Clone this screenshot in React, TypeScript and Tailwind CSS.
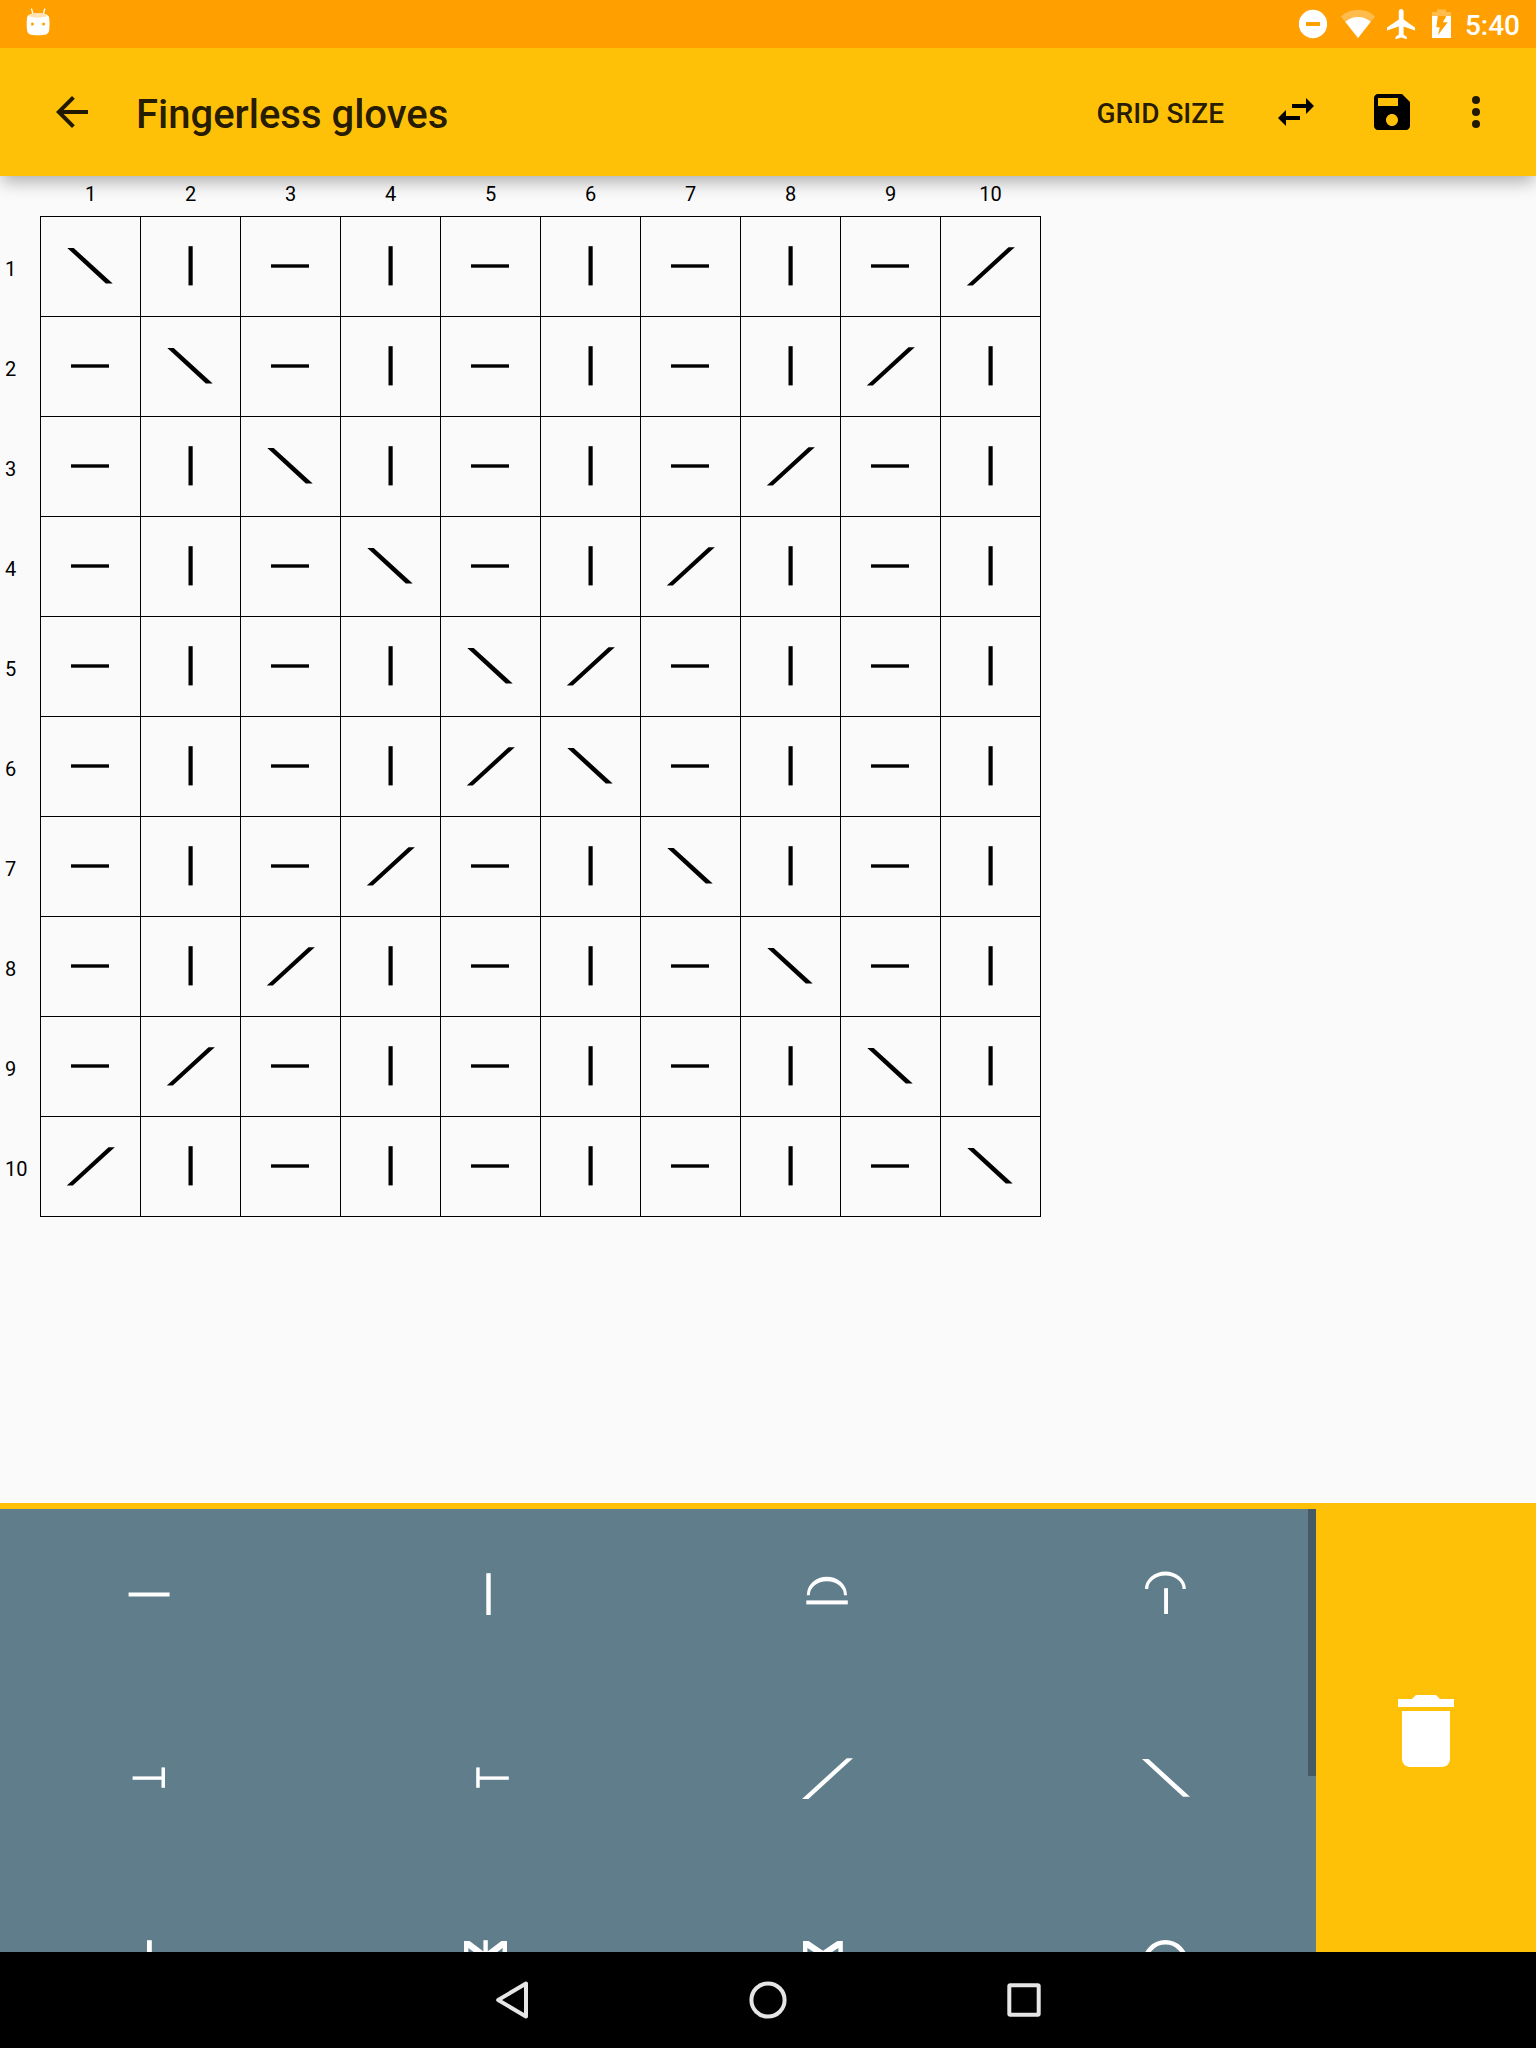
import React from "react";

type StitchName = "purl" | "knit" | "left" | "right";

const SIZE = 10;
const INDEXES = Array.from({ length: SIZE }, (_, i) => i);

function stitchAt(row: number, col: number): StitchName {
  if (row === col) return "left";
  if (row + col === SIZE - 1) return "right";
  return col % 2 === 1 ? "knit" : "purl";
}

function GridStitch({ name }: { name: StitchName }) {
  return (
    <svg viewBox="0 0 100 100" className="size-[100px]" fill="#000">
      {name === "purl" && <rect x="31" y="48.3" width="38" height="3.4" />}
      {name === "knit" && <rect x="48.5" y="30.2" width="4.2" height="39.2" />}
      {name === "left" && <path d="M27.3 32H33.7L72.7 67.5H65.8Z" />}
      {name === "right" && <path d="M26.8 69.5L68.5 31.2H74.8L32.8 69.5Z" />}
    </svg>
  );
}

const PALETTE: React.ReactNode[] = [
  <rect x="28.6" y="48.5" width="41" height="4" />,
  <rect x="47.3" y="29.2" width="4.4" height="41.8" />,
  <>
    <path d="M28.8 51.2A20.1 18.5 0 0 1 69 51.2H66A17.1 14 0 0 0 31.8 51.2Z" />
    <rect x="28.3" y="56.4" width="41.5" height="4" />
  </>,
  <>
    <path d="M28 45A20.4 17.4 0 0 1 68.8 45H65.6A17.2 13.4 0 0 0 31.2 45Z" />
    <rect x="47.1" y="44.2" width="3.9" height="25.8" />
  </>,
  <>
    <rect x="32.6" y="48.4" width="29.7" height="3.4" />
    <rect x="61.5" y="39.4" width="3.5" height="20.4" />
  </>,
  <>
    <rect x="40" y="48.4" width="29.8" height="3.4" />
    <rect x="37.2" y="39.4" width="3.5" height="20.4" />
  </>,
  <path d="M24 71L68.7 30.2H75L30.4 71Z" />,
  <path d="M25 31.1H31.6L73 68.8H66Z" />,
  <rect x="47" y="28.2" width="4.8" height="42" />,
  <>
    <path d="M25 29H30.6L46.5 41L62.4 29H68V71H63.6V36L46.5 49L29.4 36V71H25Z" />
    <rect x="44.4" y="28.2" width="4.4" height="42" />
  </>,
  <path d="M25 29H30.6L45 38.8L59.4 29H64.8V71H60.4V36L45 46L29.4 36V71H25Z" />,
  <circle cx="48.4" cy="50.7" r="20.4" fill="none" stroke="#fff" strokeWidth="4.6" />,
];

function StatusBar() {
  return (
    <div className="flex h-12 items-center justify-between bg-[#ffa000] text-white">
      <svg viewBox="0 0 48 48" className="ml-[5px] size-12" fill="#fff">
        <path d="M26.4 8.5L28 14M39.8 8.5L38.4 14" stroke="#fff" strokeWidth="1.3" fill="none" />
        <path
          fillRule="evenodd"
          d="M22 18C22.5 14.8 26 13.6 33 13.6S43.8 14.8 44.2 18C44.6 21.5 44.6 26.5 44.2 30C43.8 34 41 35.3 33 35.3S22.4 34 22 30C21.6 26.5 21.6 21.5 22 18ZM27.4 22.5A1.5 1.5 0 1 0 27.4 25.5A1.5 1.5 0 1 0 27.4 22.5ZM38.6 22.5A1.5 1.5 0 1 0 38.6 25.5A1.5 1.5 0 1 0 38.6 22.5Z"
        />
        <ellipse cx="33" cy="15.4" rx="9.2" ry="2.3" fill="#ffe3b5" />
      </svg>
      <div className="flex items-center pr-4">
        <svg viewBox="0 0 28 48" className="mr-[14px] h-12 w-7">
          <circle cx="14" cy="24" r="14.2" fill="#fff" />
          <rect x="7" y="22" width="14" height="4" fill="#ffa000" />
        </svg>
        <svg viewBox="0 0 34 48" className="mr-3 h-12 w-[34px]" fill="#fff">
          <path d="M17 38L0 16.5C4.5 12 10.5 10 17 10S29.5 12 34 16.5Z" opacity=".3" />
          <path d="M17 38L4.3 21.8C8 18.5 12 17 17 17S26 18.5 29.7 21.8Z" />
        </svg>
        <svg viewBox="0 0 28 48" className="mr-[17px] h-12 w-7" fill="#fff">
          <path d="M28 30.5V27.5L16.6 19.5V11.5C16.6 10 15.5 9 14.2 9S11.8 10 11.8 11.5V19.5L0 27.5V30.5L11.8 26.5V34.5L8.5 37V39.2L14.2 37.5L19.8 39.2V37L16.6 34.5V26.5Z" />
        </svg>
        <svg viewBox="0 0 19 48" className="mr-[14px] h-12 w-[19px]" fill="#fff">
          <path d="M0 16V12H5V9.5H14V12H19V16Z" opacity=".3" />
          <path fillRule="evenodd" d="M0 16H19V38H0ZM8.5 16H5.8L4.3 27.3H7.8L6 35L15.8 22.3H10.8L14.3 16.4L13.3 16Z" />
        </svg>
        <span className="pt-1 text-[28px] leading-[44px] font-medium">5:40</span>
      </div>
    </div>
  );
}

function AppBar() {
  return (
    <header className="flex h-32 items-center bg-[#ffc107] pr-9 pl-12 text-black/87">
      <svg viewBox="0 0 24 24" className="size-12" fill="currentColor">
        <path d="M20 11H7.83l5.59-5.59L12 4l-8 8 8 8 1.41-1.41L7.83 13H20v-2z" />
      </svg>
      <h1 className="ml-10 pt-1.5 text-[40px] leading-[48px] font-medium">Fingerless gloves</h1>
      <div className="ml-auto flex items-center">
        <span className="mr-12 pt-1 text-[28px] leading-8 font-medium">GRID SIZE</span>
        <svg viewBox="0 0 24 24" className="mr-12 size-12" fill="#000">
          <path d="M6.99 11L3 15l3.99 4v-3H14v-2H6.99v-3zM21 9l-3.99-4v3H10v2h7.01v3L21 9z" />
        </svg>
        <svg viewBox="0 0 24 24" className="mr-9 size-12" fill="#000">
          <path d="M17 3H5c-1.11 0-2 .9-2 2v14c0 1.1.89 2 2 2h14c1.1 0 2-.9 2-2V7l-4-4zm-5 16c-1.66 0-3-1.34-3-3s1.34-3 3-3 3 1.34 3 3-1.34 3-3 3zm3-10H5V5h10v4z" />
        </svg>
        <svg viewBox="0 0 24 24" className="size-12" fill="currentColor">
          <circle cx="12" cy="6" r="2" />
          <circle cx="12" cy="12" r="2" />
          <circle cx="12" cy="18" r="2" />
        </svg>
      </div>
    </header>
  );
}

function Chart() {
  return (
    <main className="h-[1327px] bg-[#fafafa] text-[20px] text-black">
      <div className="flex h-10 pl-[40.6px]">
        {INDEXES.map((i) => (
          <span key={i} className="w-[100px] pt-1.5 text-center leading-6">
            {i + 1}
          </span>
        ))}
      </div>
      <div className="flex">
        <div className="w-10">
          {INDEXES.map((i) => (
            <div key={i} className="flex h-[100px] items-center pt-[6px] pl-[5px] leading-6">
              {i + 1}
            </div>
          ))}
        </div>
        <div className="grid grid-cols-[repeat(10,100px)] border-t border-l border-black">
          {INDEXES.map((row) =>
            INDEXES.map((col) => (
              <div key={`${row}-${col}`} className="size-[100px] border-r border-b border-black">
                <div className="-mt-px -ml-px size-[100px]">
                  <GridStitch name={stitchAt(row, col)} />
                </div>
              </div>
            )),
          )}
        </div>
      </div>
    </main>
  );
}

function StitchPalette() {
  return (
    <section className="flex h-[449px] border-t-[6px] border-[#ffc107]">
      <div className="flex w-[1316px] overflow-hidden bg-[#607d8b]">
        <div className="grid w-[1316px] shrink-0 auto-rows-[100px] grid-cols-4 gap-x-10 gap-y-[84px] pt-[35px]">
          {PALETTE.map((symbol, i) => (
            <div key={i} className="flex justify-center">
              <svg viewBox="0 0 99 100" className="h-[100px] w-[99px]" fill="#fff">
                {symbol}
              </svg>
            </div>
          ))}
        </div>
        <div className="-ml-2 h-[267px] w-2 shrink-0 bg-[#465a65]" />
      </div>
      <div className="flex w-[220px] items-center justify-center bg-[#ffc107]">
        <svg viewBox="0 0 24 24" className="size-24" fill="#fff">
          <path d="M6 19c0 1.1.9 2 2 2h8c1.1 0 2-.9 2-2V7H6v12zM19 4h-3.5l-1-1h-5l-1 1H5v2h14V4z" />
        </svg>
      </div>
    </section>
  );
}

function NavigationBar() {
  return (
    <nav className="flex h-24 items-center justify-center gap-40 bg-black">
      <svg viewBox="0 0 96 96" className="size-24" fill="none" stroke="#e6e6e6" strokeWidth="4" strokeLinejoin="round">
        <path d="M34.2 48L62 31.5V64.5Z" />
      </svg>
      <svg viewBox="0 0 96 96" className="size-24" fill="none" stroke="#e6e6e6" strokeWidth="4">
        <circle cx="48" cy="48" r="16.6" />
      </svg>
      <svg viewBox="0 0 96 96" className="size-24" fill="none" stroke="#e6e6e6" strokeWidth="4">
        <rect x="33.3" y="33.3" width="29.4" height="29.4" rx="1" />
      </svg>
    </nav>
  );
}

export default function App() {
  return (
    <div className="flex h-[2048px] w-[1536px] flex-col overflow-hidden bg-[#fafafa] font-['Roboto',sans-serif]">
      <div className="relative z-10 shadow-[0_8px_16px_-2px_rgba(0,0,0,0.3)]">
        <StatusBar />
        <AppBar />
      </div>
      <Chart />
      <StitchPalette />
      <NavigationBar />
    </div>
  );
}
